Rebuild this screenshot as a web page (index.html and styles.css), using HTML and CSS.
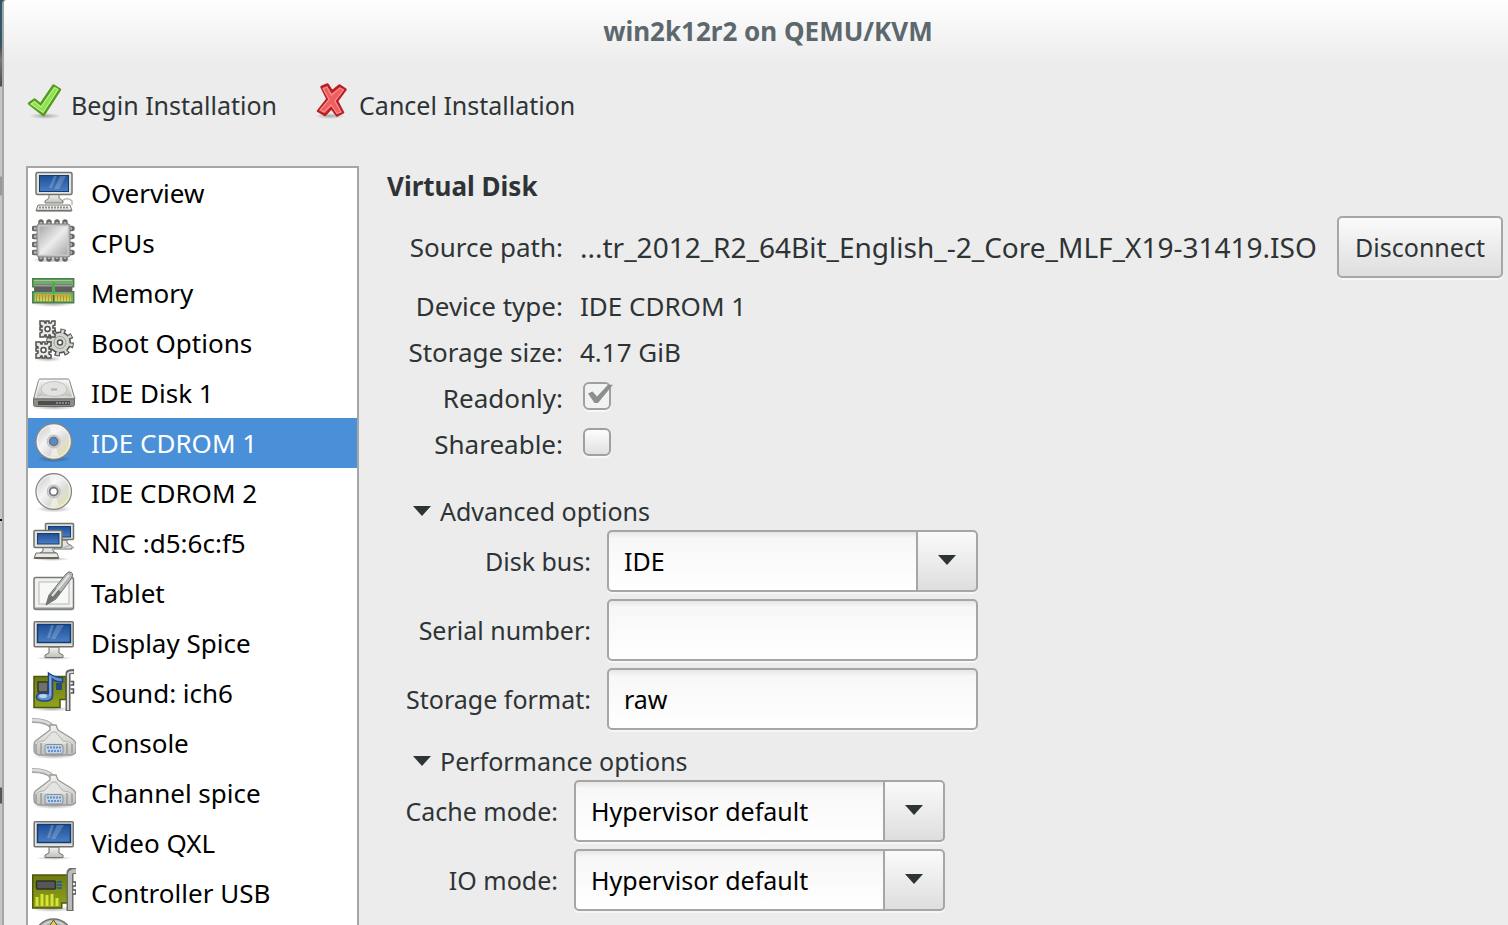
FILE: index.html
```html
<!DOCTYPE html>
<html lang="en">
<head>
<meta charset="utf-8">
<title>win2k12r2 on QEMU/KVM</title>
<link rel="stylesheet" href="styles.css">
</head>
<body>
<svg class="defs" aria-hidden="true">
  <defs>
    <linearGradient id="g-screen" x1="0" y1="0" x2="0" y2="1"><stop offset="0" stop-color="#1d4f97"/><stop offset="1" stop-color="#4a7fc4"/></linearGradient>
    <linearGradient id="g-metal" x1="0" y1="0" x2="0" y2="1"><stop offset="0" stop-color="#f4f4f1"/><stop offset="1" stop-color="#bfc0ba"/></linearGradient>
    <linearGradient id="g-chip" x1="0" y1="0" x2="1" y2="1"><stop offset="0" stop-color="#a8a8a8"/><stop offset=".5" stop-color="#ececec"/><stop offset="1" stop-color="#a8a8a8"/></linearGradient>
    <linearGradient id="g-disc" x1="0" y1="0" x2="1" y2="1"><stop offset="0" stop-color="#c2c2c2"/><stop offset=".4" stop-color="#f5f5f5"/><stop offset=".6" stop-color="#dcdcdc"/><stop offset=".8" stop-color="#e2dfb8"/><stop offset="1" stop-color="#d0d0d0"/></linearGradient>
    <linearGradient id="g-board" x1="0" y1="0" x2="0" y2="1"><stop offset="0" stop-color="#6c7a10"/><stop offset="1" stop-color="#93a41c"/></linearGradient>
    <linearGradient id="g-gold" x1="0" y1="0" x2="0" y2="1"><stop offset="0" stop-color="#b9a93a"/><stop offset="1" stop-color="#e3d55a"/></linearGradient>
    <radialGradient id="g-shadow"><stop offset="0" stop-color="#000" stop-opacity=".3"/><stop offset="1" stop-color="#000" stop-opacity="0"/></radialGradient>

    <symbol id="i-overview" viewBox="0 0 44 44">
      <path d="M31 32q6-3 9 1v4" fill="none" stroke="#b8b9b3" stroke-width="1.5"/>
      <path d="M17 26h10v4l4 3v2H13v-2l4-3z" fill="url(#g-metal)" stroke="#777a74"/>
      <rect x="4" y="4.500" width="36" height="22" rx="1.500" fill="#e4e4df" stroke="#71736c" stroke-width="1.500"/>
      <rect x="7.500" y="7.500" width="29" height="16" fill="url(#g-screen)" stroke="#173a70"/>
      <path d="M22 8h3l-5 12h-3zM28 8h6l-7 13h-5z" fill="#fff" opacity=".2"/>
      <path d="M6 37h32l2 6H4z" fill="#efefec" stroke="#777a74"/>
      <path d="M7 39.500h30" stroke="#8d8f89" stroke-width="2" stroke-dasharray="2 1"/>
      <path d="M5 42.500h34" stroke="#71736c" stroke-width="1.500"/>
    </symbol>
    <symbol id="i-cpu" viewBox="0 0 44 44">
      <ellipse cx="21" cy="42" rx="22" ry="3" fill="url(#g-shadow)"/>
      <path d="M9 4v37M17 4v37M25 4v37M33 4v37M2 10.500h38M2 18.500h38M2 26.500h38M2 34.500h38" stroke="#686a66" stroke-width="5.500" stroke-linecap="round"/>
      <path d="M9 4v37M17 4v37M25 4v37M33 4v37M2 10.500h38M2 18.500h38M2 26.500h38M2 34.500h38" stroke="#b4b6b1" stroke-width="2.500"/>
      <rect x="5" y="6" width="33" height="33" rx="2" fill="#bcbcbc" stroke="#808280"/>
      <rect x="7" y="8" width="29" height="29" fill="url(#g-chip)" stroke="#d0d0d0" stroke-width=".8"/>
    </symbol>
    <symbol id="i-memory" viewBox="0 0 44 44">
      <ellipse cx="21" cy="36" rx="22" ry="3" fill="url(#g-shadow)"/>
      <path d="M.7 10.700h41v8h-2v5h2v11H.7v-11h2v-5h-2z" fill="#6dac6a" stroke="#4d7f4b" stroke-width="1.400"/>
      <path d="M2 12.500h38" stroke="#a1c89f"/>
      <rect x="3" y="16" width="17" height="8" fill="#5e5f5b"/><rect x="23" y="16" width="17" height="8" fill="#5e5f5b"/>
      <path d="M3 17.500h17M23 17.500h17" stroke="#9c9d99" stroke-width="2"/>
      <path d="M21.500 14v13" stroke="#35b43c" stroke-width="2"/>
      <rect x="3" y="26" width="36" height="7" fill="url(#g-gold)"/>
      <path d="M4 30h35" stroke="#a3993c" stroke-width="6" stroke-dasharray="1 2"/>
      <path d="M21.500 27v7" stroke="#3d703b" stroke-width="1.500"/>
    </symbol>
    <symbol id="i-boot" viewBox="0 0 44 44">
      <ellipse cx="16" cy="41" rx="14" ry="3" fill="url(#g-shadow)"/>
      <g fill="#d3d6d0" stroke="#50544e">
        <circle cx="28" cy="24.500" r="11.500" fill="none" stroke-width="5" stroke-dasharray="5 4.030"/>
        <circle cx="28" cy="24.500" r="10.300" stroke-width="1.500"/>
        <circle cx="28" cy="24.500" r="11" fill="none" stroke="#d3d6d0" stroke-width="4" stroke-dasharray="2.600 6.040" stroke-dashoffset="-1"/>
        <circle cx="28" cy="24.500" r="6" fill="none" stroke="#9a9d97"/>
        <circle cx="28" cy="24.500" r="2.500" fill="#fff" stroke-width="1.500"/>
      </g>
      <g fill="#e9eae7" stroke="#4d504b" stroke-width="1.500">
        <path id="cog" d="M9 3h3l1 2h1V3h3v2h2l1-2h3v4l-2 1v2h2v3h-2v2l2 1v3h-4l-1-2h-1v2h-3v-2h-1l-1 2H8v-4l2-1v-2H8v-3h2V8L8 7V3z"/>
        <circle cx="15.500" cy="11" r="2.500" fill="#fff"/>
        <use href="#cog" x="-4" y="21"/>
        <circle cx="11.500" cy="32" r="2.500" fill="#fff"/>
      </g>
    </symbol>
    <symbol id="i-disk" viewBox="0 0 44 44">
      <ellipse cx="22" cy="39.500" rx="22" ry="2.500" fill="url(#g-shadow)"/>
      <path d="M8 11h28q1 0 1.500 1.500L43 31H1.500L6.500 12.500Q7 11 8 11z" fill="url(#g-metal)" stroke="#858782"/>
      <path d="M8 13h28l5 16H3.500z" fill="none" stroke="#fff" opacity=".7"/>
      <ellipse cx="22" cy="21" rx="13" ry="7.500" fill="#e2e3e0" stroke="#c0c2bd"/>
      <path d="M19 21.500h6" stroke="#adafab" stroke-width="2"/>
      <path d="M5 29l5-3M39 29l-5-3" stroke="#bbb"/>
      <path d="M1.500 31h41v5.500q0 2-2 2h-37q-2 0-2-2z" fill="#8b8e88" stroke="#6b6e69"/>
      <rect x="6" y="33" width="32" height="4" fill="#4c4e4b"/>
      <path d="M24 35h13" stroke="#85898a" stroke-width="2" stroke-dasharray="2 1"/>
    </symbol>
    <symbol id="i-cd" viewBox="0 0 44 44">
      <ellipse cx="22" cy="41" rx="18" ry="3.500" fill="url(#g-shadow)"/>
      <circle cx="21.700" cy="23.500" r="17.800" fill="url(#g-disc)" stroke="#858680" stroke-width="1.200"/>
      <circle cx="21.700" cy="23.500" r="16.300" fill="none" stroke="#fff" opacity=".6"/>
      <path d="M21.700 23.500L17 8l8-1zM21.700 23.500l5 14-8 2z" fill="#fff" opacity=".45"/>
      <circle cx="21.700" cy="23.500" r="6.500" fill="#d5d5d5" stroke="#bcbcbc"/>
      <circle cx="21.700" cy="23.500" r="4" stroke="#74767a" stroke-width="1.800"/>
    </symbol>
    <symbol id="i-nic" viewBox="0 0 44 44">
      <ellipse cx="20" cy="41" rx="18" ry="2" fill="url(#g-shadow)"/>
      <path d="M27 22h8v3l5 3v3H22z" fill="#e3e4df" stroke="#71736c"/>
      <path d="M30 31q8-6 12-1" fill="none" stroke="#b8b9b3" stroke-width="1.500"/>
      <rect x="13.500" y="5.500" width="28" height="16" rx="1" fill="#dedfd9" stroke="#71736c" stroke-width="1.500"/>
      <rect x="16.500" y="8.500" width="22" height="10.500" fill="url(#g-screen)" stroke="#173a70"/>
      <path d="M11 29h10v4l3 2H8l3-2z" fill="#e3e4df" stroke="#71736c"/>
      <rect x="2" y="12.500" width="28" height="17" rx="1" fill="#e4e4df" stroke="#71736c" stroke-width="1.500"/>
      <rect x="5.500" y="15.500" width="21.500" height="10.500" fill="url(#g-screen)" stroke="#173a70"/>
      <path d="M4 35h21l2 5.500H2z" fill="#e9e9e5" stroke="#71736c"/>
      <path d="M3 40h23" stroke="#65675f" stroke-width="2"/>
    </symbol>
    <symbol id="i-tablet" viewBox="0 0 44 44">
      <rect x="2" y="9.500" width="39.500" height="32" rx="2" fill="#f1f1ef" stroke="#777974" stroke-width="1.500"/>
      <rect x="7" y="14" width="30" height="22" fill="#f8f8f7" stroke="#b7b9b4"/>
      <path d="M3 40.500h38" stroke="#8f918c" stroke-width="2"/>
      <path d="M14 37l3-10L34 6q3-3.500 5.500-1.500T39 11L24 31z" fill="#b4b7b6" stroke="#6f7372"/>
      <path d="M14 37l3-9 7-8 5 4-6 7z" fill="#707473"/>
      <path d="M20 28L37 7" stroke="#e3e5e4" stroke-width="2"/>
    </symbol>
    <symbol id="i-display" viewBox="0 0 44 44">
      <ellipse cx="22" cy="40" rx="18" ry="2" fill="url(#g-shadow)"/>
      <path d="M17 29h10v6l4 2v2.500H13V37l4-2z" fill="url(#g-metal)" stroke="#71736c"/>
      <rect x="2.200" y="3.700" width="39" height="25" rx="1" fill="#e1e2dc" stroke="#71736c" stroke-width="1.500"/>
      <rect x="5.500" y="6.500" width="33" height="18" fill="url(#g-screen)" stroke="#173a70" stroke-width="1.500"/>
      <path d="M19 7h3l-4 13h-3zM25 7h7l-9 14h-4z" fill="#fff" opacity=".2"/>
    </symbol>
    <symbol id="i-sound" viewBox="0 0 44 44">
      <ellipse cx="20" cy="41" rx="20" ry="2.500" fill="url(#g-shadow)"/>
      <path d="M2 8.500h32v23h-6v8H2z" fill="url(#g-board)" stroke="#4c560e" stroke-width="1.500"/>
      <rect x="6" y="14" width="10" height="10" fill="#6f716d" stroke="#343632" stroke-width="1.500"/>
      <rect x="24" y="15" width="6" height="7" fill="#234a86"/>
      <path d="M36 43V5q0-1.500 6-1.500" fill="none" stroke="#61645f" stroke-width="5"/>
      <path d="M36 42V6q0-2 5.500-2" fill="none" stroke="#d7d9d5" stroke-width="2"/>
      <path d="M38.500 13.500h3v3.500h-3M38.500 21h3v4h-3" fill="#eee" stroke="#51544f" stroke-width="1.500"/>
      <path d="M16.500 5q5 4 14 5v4q-7 0-10-3v17q0 5-8 5t-8-4 7-4l5 .5z" fill="#638fd0" stroke="#1e4685" stroke-width="1.500"/>
      <path d="M18 8v20" stroke="#a6c1e7"/><ellipse cx="11" cy="28" rx="4" ry="2" fill="#bdd2ef"/>
    </symbol>
    <symbol id="i-serial" viewBox="0 0 44 44">
      <ellipse cx="22" cy="38" rx="22" ry="3" fill="url(#g-shadow)"/>
      <path d="M0 2.500q16 0 20.500 7" fill="none" stroke="#a5a7a4" stroke-width="5"/>
      <path d="M0 2q16 0 20.500 7" fill="none" stroke="#dcdddb" stroke-width="2.500"/>
      <path d="M18 7h6l2 5 13 8q5 3 5 7v6q0 3-5 4H7q-5-1-5-5v-5q0-4 4-6l12-9z" fill="url(#g-metal)" stroke="#989a97" stroke-width="1.300"/>
      <path d="M5 25q2-2 7-2l8-9h4l7 9q6 0 9 3" fill="#e4e5e3" stroke="#b4b6b3"/>
      <path d="M4 26v9M9 25v11M35 25v11M40 26v9" stroke="#9d9f9c" stroke-width="1.500"/>
      <rect x="13" y="26.500" width="18" height="9.500" rx="2" fill="#c4d3e6" stroke="#8b8e90"/>
      <path d="M15 29.500h15M16 33h13" stroke="#6290cc" stroke-width="2" stroke-dasharray="2 1"/>
    </symbol>
    <symbol id="i-controller" viewBox="0 0 44 44">
      <ellipse cx="20" cy="41" rx="22" ry="3" fill="url(#g-shadow)"/>
      <path d="M.7 7h35v28h-6v5H.7z" fill="url(#g-board)" stroke="#4c560e" stroke-width="1.500"/>
      <path d="M5 38v-9M10 38V26M15 38V27M20 38V26M25 38v-8" stroke="#d6e434" stroke-width="3"/>
      <rect x="4.500" y="13" width="19" height="8" rx="1" fill="#555752" stroke="#2e312d" stroke-width="1.500"/>
      <path d="M25 14h5M25 17h5M25 20h5" stroke="#2b5d96" stroke-width="2"/>
      <path d="M38 43V5q0-2.500 6-2.500" fill="none" stroke="#6a6d68" stroke-width="7"/>
      <path d="M38 42V6q0-3 6-3" fill="none" stroke="#babcb8" stroke-width="4"/>
      <path d="M41 14h3v4h-3M41 22h3v4h-3" fill="#eee" stroke="#51544f" stroke-width="1.500"/>
    </symbol>
    <symbol id="i-device" viewBox="0 0 44 44">
      <circle cx="21.500" cy="20" r="19" fill="#b7b9b5" stroke="#6f726d" stroke-width="1.500"/>
      <circle cx="21.500" cy="20" r="16.500" fill="none" stroke="#e2e3e0"/>
      <path d="M21.500 2l6 9h-12z" fill="#e5cf4f" stroke="#5f5a2a"/>
    </symbol>
    <symbol id="i-apply" viewBox="0 0 36 36">
      <ellipse cx="18" cy="33" rx="16" ry="3" fill="url(#g-shadow)"/>
      <path d="M2 20.500L7.500 16.500l6 5L26.500 2.500l6.500 4L16.500 32z" fill="#85d944" stroke="#559c1c" stroke-width="2.500" stroke-linejoin="round"/>
      <path d="M4 21l3.500-2.500 6.500 5.500L27.500 4.500l3.500 2L16 29.500z" fill="#8ee04f" stroke="#b9f08c" stroke-width="1.200"/>
    </symbol>
    <symbol id="i-cancel" viewBox="0 0 36 36">
      <ellipse cx="15" cy="33" rx="15" ry="3" fill="url(#g-shadow)"/>
      <path d="M6.500 4l6-2.500 4.500 7 7.500-6 6 4-8.500 11.500 6 11.500-6 3-5.500-7.500-6.500 7-7-4 9.500-12z" fill="#e94848" stroke="#b71f24" stroke-width="2.500" stroke-linejoin="round"/>
      <path d="M8 5.500l4-1.500 4.500 8L25 5l3.500 2-8.500 11 6 11-4 1.500-6-8.500-7 7-4-2 9-10.500z" fill="#f05f5f" stroke="#f99090" stroke-width="1.200"/>
    </symbol>
  </defs>
</svg>

<div class="desktop">
  <div class="window">
    <header class="titlebar"><h1 class="title">win2k12r2 on QEMU/KVM</h1></header>

    <div class="toolbar">
      <button class="tool" type="button"><svg class="tool-icon"><use href="#i-apply"/></svg><span class="tool-text">Begin Installation</span></button>
      <button class="tool" type="button"><svg class="tool-icon"><use href="#i-cancel"/></svg><span class="tool-text">Cancel Installation</span></button>
    </div>

    <div class="content">
      <nav class="hardware" aria-label="Hardware">
        <button class="hw" type="button"><svg class="hw-icon"><use href="#i-overview"/></svg>Overview</button>
        <button class="hw" type="button"><svg class="hw-icon"><use href="#i-cpu"/></svg>CPUs</button>
        <button class="hw" type="button"><svg class="hw-icon"><use href="#i-memory"/></svg>Memory</button>
        <button class="hw" type="button"><svg class="hw-icon"><use href="#i-boot"/></svg>Boot Options</button>
        <button class="hw" type="button"><svg class="hw-icon"><use href="#i-disk"/></svg>IDE Disk 1</button>
        <button class="hw selected" type="button" aria-current="true"><svg class="hw-icon"><use href="#i-cd"/></svg>IDE CDROM 1</button>
        <button class="hw" type="button"><svg class="hw-icon"><use href="#i-cd"/></svg>IDE CDROM 2</button>
        <button class="hw" type="button"><svg class="hw-icon"><use href="#i-nic"/></svg>NIC :d5:6c:f5</button>
        <button class="hw" type="button"><svg class="hw-icon"><use href="#i-tablet"/></svg>Tablet</button>
        <button class="hw" type="button"><svg class="hw-icon"><use href="#i-display"/></svg>Display Spice</button>
        <button class="hw" type="button"><svg class="hw-icon"><use href="#i-sound"/></svg>Sound: ich6</button>
        <button class="hw" type="button"><svg class="hw-icon"><use href="#i-serial"/></svg>Console</button>
        <button class="hw" type="button"><svg class="hw-icon"><use href="#i-serial"/></svg>Channel spice</button>
        <button class="hw" type="button"><svg class="hw-icon"><use href="#i-display"/></svg>Video QXL</button>
        <button class="hw" type="button"><svg class="hw-icon"><use href="#i-controller"/></svg>Controller USB</button>
        <button class="hw" type="button" aria-label="Device"><svg class="hw-icon"><use href="#i-device"/></svg></button>
      </nav>

      <main class="details">
        <h2 class="heading">Virtual Disk</h2>
        <div class="row source">
          <span class="label">Source path:</span>
          <span class="value path">...tr_2012_R2_64Bit_English_-2_Core_MLF_X19-31419.ISO</span>
          <button class="disconnect" type="button">Disconnect</button>
        </div>
        <div class="row"><span class="label">Device type:</span><span class="value">IDE CDROM 1</span></div>
        <div class="row"><span class="label">Storage size:</span><span class="value">4.17 GiB</span></div>
        <div class="row"><label class="label" for="readonly">Readonly:</label><input class="check" type="checkbox" id="readonly" checked></div>
        <div class="row"><label class="label" for="shareable">Shareable:</label><input class="check" type="checkbox" id="shareable"></div>

        <details class="group advanced" open>
          <summary class="summary"><span class="expander"></span>Advanced options</summary>
          <div class="fields">
            <label class="label" for="bus">Disk bus:</label>
            <div class="combo"><select class="field" id="bus"><option>IDE</option></select></div>
            <label class="label" for="serial">Serial number:</label>
            <input class="field" type="text" id="serial">
            <label class="label" for="format">Storage format:</label>
            <input class="field" type="text" id="format" value="raw">
          </div>
        </details>

        <details class="group performance" open>
          <summary class="summary"><span class="expander"></span>Performance options</summary>
          <div class="fields">
            <label class="label" for="cache">Cache mode:</label>
            <div class="combo"><select class="field" id="cache"><option>Hypervisor default</option></select></div>
            <label class="label" for="io">IO mode:</label>
            <div class="combo"><select class="field" id="io"><option>Hypervisor default</option></select></div>
          </div>
        </details>
      </main>
    </div>
  </div>
</div>
</body>
</html>
```
FILE: styles.css
```css
* { box-sizing: border-box; }

body {
  margin: 0;
  color: #2e3436;
  font: 25px/32px "Noto Sans", "Open Sans", sans-serif;
}

button, input, select { color: inherit; font: inherit; }
.defs { position: absolute; width: 0; height: 0; }

/* The sliver of the desktop to the left of the window */
.desktop {
  height: 100vh;
  padding-left: 2px;
  overflow: hidden;
  background: linear-gradient(#2b5967 46px, #4c4c4c 46px, #777 60px, #4c4c4c 86px, #c6c6c6 87px, #c6c6c6 176px, #999 177px, #999 195px, #c6c6c6 196px, #c6c6c6 519px, #111 519px, #111 521px, #c6c6c6 521px, #c6c6c6 787px, #555 788px, #555 803px, #c6c6c6 804px);
}

.window {
  display: flex;
  flex-direction: column;
  height: 100%;
  border-left: 2px solid #a6a6a6;
  border-top-left-radius: 4px;
  background: linear-gradient(#fefefe, #ececec 64px);
}

.titlebar { padding: 15px 0 16px 24px; text-align: center; }
.title { margin: 0; color: #5c686d; font-size: 26px; line-height: 32px; }

.toolbar { display: flex; gap: 38px; padding: 20px 23px 43px; }
.tool {
  display: flex;
  gap: 8px;
  padding: 0;
  border: 0;
  background: none;
}
.tool-icon { width: 36px; height: 36px; }
.tool-text { padding-top: 4px; line-height: 36px; }

.content { display: flex; flex: 1; gap: 28px; min-height: 0; padding-left: 22px; }

.hardware {
  flex: 0 0 333px;
  overflow: hidden;
  border: 2px solid #a6a6a6;
  border-bottom: 0;
  background: #fff;
  color: #000;
}
.hw {
  display: flex;
  align-items: center;
  gap: 15px;
  width: 100%;
  height: 50px;
  padding: 0 4px;
  border: 0;
  background: none;
  font-size: 26px;
  text-align: left;
}
.hw-icon { flex: none; align-self: flex-start; width: 44px; height: 44px; fill: #fff; }
.selected { background: #4a90d9; color: #fff; }
.selected .hw-icon { fill: #4a90d9; }

.details { flex: 1; min-width: 0; padding: 4px 5px 0 0; }
.heading { margin: 0 0 14px; font-size: 26px; line-height: 32px; }

.row { display: flex; align-items: center; gap: 17px; height: 46px; font-size: 26px; }
.source { height: 62px; margin-bottom: 5px; }
.label { text-align: right; white-space: nowrap; }
.row .label { flex: 0 0 176px; }
.value { flex: 1; min-width: 0; white-space: nowrap; }
.path { font-size: 28px; }

.disconnect {
  width: 166px;
  height: 62px;
  padding: 0;
  border: 2px solid #a6a6a6;
  border-radius: 5px;
  background: linear-gradient(#fbfbfb, #dedede);
  box-shadow: 0 2px 0 #f6f6f6;
  font-size: 25px;
}

.check {
  position: relative;
  width: 28px;
  height: 28px;
  margin: 0 3px 4px;
  appearance: none;
  border: 2px solid #a0a0a0;
  border-radius: 6px;
  background: linear-gradient(#fdfdfd, #e0e0e0);
  box-shadow: 0 2px 0 #f8f8f8;
}
.check:checked { background: #f2f2f2; }
.check:checked::after {
  position: absolute;
  inset: 0 -4px 4px 3px;
  background: #8b8f90;
  clip-path: polygon(0 48%, 18% 38%, 36% 62%, 80% 4%, 100% 4%, 40% 95%, 26% 95%);
  content: "";
}

.summary { display: flex; align-items: center; gap: 9px; padding-left: 26px; list-style: none; }
.expander, .combo::after {
  width: 18px;
  height: 10px;
  background: #2e3436;
  clip-path: polygon(0 0, 100% 0, 50% 100%);
  content: "";
}
.group { margin-top: 15px; }
.advanced { margin-top: 28px; }

.fields {
  display: grid;
  grid-template-columns: 204px 371px;
  align-items: center;
  gap: 7px 16px;
  padding-top: 3px;
}
.performance .fields { grid-template-columns: 171px 371px; }

.field {
  display: block;
  width: 100%;
  height: 62px;
  padding: 0 15px;
  appearance: none;
  border: 2px solid #a6a6a6;
  border-radius: 5px;
  background: linear-gradient(#e6e6e6, #f7f7f7 6px, #fff);
  box-shadow: 0 2px 0 #f6f6f6;
  color: #000;
}
.combo { position: relative; }
.combo .field {
  background:
    linear-gradient(#a6a6a6, #a6a6a6) right 58px top / 2px 100% no-repeat,
    linear-gradient(#fafafa, #dedede) right / 58px 100% no-repeat,
    linear-gradient(#e6e6e6, #f7f7f7 6px, #fff);
}
.combo::after { position: absolute; top: 25px; right: 22px; pointer-events: none; }
```
